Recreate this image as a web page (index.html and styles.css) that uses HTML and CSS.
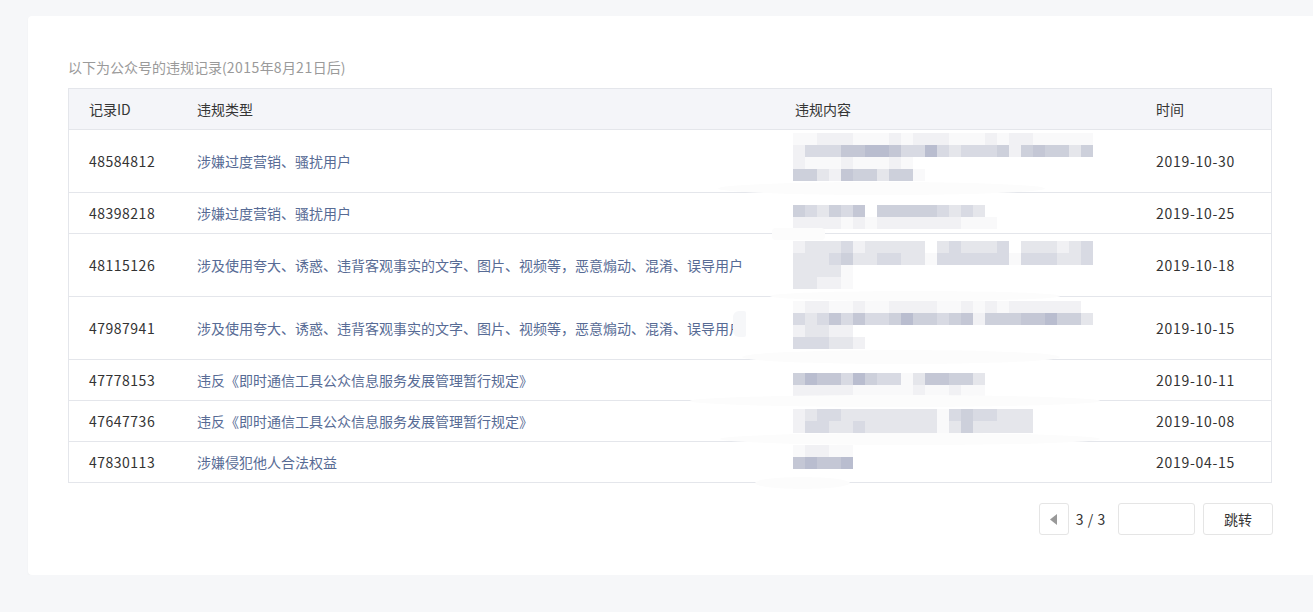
FILE: index.html
```html
<!DOCTYPE html>
<html lang="zh-CN">
<head>
<meta charset="utf-8">
<title>违规记录</title>
<link rel="stylesheet" href="styles.css">
</head>
<body>
<div class="card">
  <div class="content">
    <p class="caption">以下为公众号的违规记录(<span class="num">2015</span>年<span class="num">8</span>月<span class="num">21</span>日后)</p>
    <div class="table-wrap">
      <table class="records">
        <colgroup>
          <col class="c-id"><col class="c-type"><col class="c-body"><col class="c-time">
        </colgroup>
        <thead>
          <tr><th>记录ID</th><th>违规类型</th><th>违规内容</th><th>时间</th></tr>
        </thead>
        <tbody>
          <tr>
            <td class="num">48584812</td>
            <td class="type">涉嫌过度营销、骚扰用户</td>
            <td class="body"><div class="mosaic" data-lines="2" data-off="-6" data-rows="1122211121222111212211111|2444667764474344452565535|2111211121|55326553551"></div></td>
            <td class="num date">2019-10-30</td>
          </tr>
          <tr>
            <td class="num">48398218</td>
            <td class="type">涉嫌过度营销、骚扰用户</td>
            <td class="body"><div class="mosaic" data-lines="1" data-off="3" data-rows="5435460555554343|22221212222222111"></div></td>
            <td class="num date">2019-10-25</td>
          </tr>
          <tr>
            <td class="num">48115126</td>
            <td class="type">涉及使用夸大、诱惑、违背客观事实的文字、图片、视频等，恶意煽动、混淆、误导用户</td>
            <td class="body"><div class="mosaic" data-lines="2" data-off="-2" data-rows="2333423333303433340333234|3334533443314444441444334|33331|33221"></div></td>
            <td class="num date">2019-10-18</td>
          </tr>
          <tr>
            <td class="num">47987941</td>
            <td class="type">涉及使用夸大、诱惑、违背客观事实的文字、图片、视频等，恶意煽动、混淆、误导用户</td>
            <td class="body"><div class="mosaic" data-lines="2" data-off="-5" data-rows="122112112222112121222222|4346464457554562555667553|23322|444332"></div></td>
            <td class="num date">2019-10-15</td>
          </tr>
          <tr>
            <td class="num">47778153</td>
            <td class="type">违反《即时通信工具公众信息服务发展管理暂行规定》</td>
            <td class="body"><div class="mosaic" data-lines="1" data-off="4" data-rows="5766475441366553|2222211111211211"></div></td>
            <td class="num date">2019-10-11</td>
          </tr>
          <tr>
            <td class="num">47647736</td>
            <td class="type">违反《即时通信工具公众信息服务发展管理暂行规定》</td>
            <td class="body"><div class="mosaic" data-lines="1" data-off="-1" data-rows="23443333333314544333|24433433333313533333"></div></td>
            <td class="num date">2019-10-08</td>
          </tr>
          <tr>
            <td class="num">47830113</td>
            <td class="type">涉嫌侵犯他人合法权益</td>
            <td class="body"><div class="mosaic" data-lines="1" data-off="-6" data-rows="12211|67667"></div></td>
            <td class="num date">2019-04-15</td>
          </tr>
        </tbody>
      </table>
      <div class="smudges" aria-hidden="true">
        <span class="smudge sm1"></span>
        <span class="smudge sm2"></span>
        <span class="smudge sm3"></span>
        <span class="smudge sm4"></span>
        <span class="smudge sm5"></span>
        <span class="smudge sm6"></span>
        <span class="smudge sm7"></span>
        <span class="smudge sm8"></span>
      </div>
    </div>
    <div class="pager">
      <button class="pg-btn pg-prev" type="button" aria-label="上一页">
        <svg width="7" height="11" viewBox="0 0 7 11"><polygon points="7,0 7,11 0,5.5" fill="#999999"/></svg>
      </button>
      <span class="pg-num num">3 / 3</span>
      <input class="pg-input" type="text" aria-label="页码">
      <button class="pg-btn pg-go" type="button">跳转</button>
    </div>
  </div>
</div>
<script src="script.js"></script>
</body>
</html>
```

FILE: styles.css
```css
html, body {
  margin: 0;
  padding: 0;
}
body {
  background: #f6f7f9;
  overflow: hidden;
  font-family: "Noto Sans CJK SC", "Noto Sans", sans-serif;
  font-size: 14px;
  color: #353535;
}
.card {
  margin: 16px 0 0 28px;
  width: 1320px;
  background: #fff;
  border-radius: 4px;
  box-shadow: 0 1px 2px rgba(0, 0, 0, 0.04);
  padding: 40px 0 40px 40px;
  box-sizing: border-box;
}
.content {
  width: 1205px;
}
.caption {
  margin: 0 0 10px;
  line-height: 22px;
  color: #9a9a9a;
}
.num {
  letter-spacing: 0.5px;
}
.table-wrap {
  position: relative;
  width: 1204px;
}
.records {
  width: 1204px;
  table-layout: fixed;
  border-collapse: separate;
  border-spacing: 0;
  border: 1px solid #e4e6eb;
  border-bottom: none;
}
.c-id { width: 108px; }
.c-type { width: 598px; }
.c-body { width: 361px; }
.records th,
.records td {
  padding: 9px 0 9px 20px;
  line-height: 22px;
  text-align: left;
  vertical-align: middle;
  border-bottom: 1px solid #e4e6eb;
  white-space: nowrap;
  overflow: visible;
  font-weight: normal;
}
.records th {
  background: #f4f5f9;
  color: #353535;
}
.records td {
  color: #333;
}
.records td.date {
  letter-spacing: 0.7px;
}
.records td.type {
  color: #576b95;
}
.mosaic {
  display: grid;
  grid-template-columns: repeat(25, 12px);
  grid-auto-rows: 12px;
  margin-left: -2px;
  align-content: start;
}
.mosaic span { display: block; }
.s0 { background: transparent; }
.s1 { background: #f9f9fa; }
.s2 { background: #f1f1f4; }
.s3 { background: #e5e6eb; }
.s4 { background: #d8dae3; }
.s5 { background: #cdd0db; }
.s6 { background: #c4c7d5; }
.s7 { background: #b9bdcf; }

.smudges {
  position: absolute;
  left: 0;
  top: 0;
  width: 0;
  height: 0;
}
.smudge {
  position: absolute;
  display: block;
  background: #fcfcfc;
  border-radius: 50%;
}
.sm1 { left: 650px; top: 94px; width: 327px; height: 13px; }
.sm2 { left: 704px; top: 140px; width: 53px; height: 12px; border-radius: 4px; }
.sm3 { left: 702px; top: 203px; width: 290px; height: 10px; }
.sm4 { left: 665px; top: 223px; width: 13px; height: 26px; border-radius: 6px 2px 2px 6px; background: #f6f7f9; }
.sm5 { left: 674px; top: 262px; width: 318px; height: 14px; }
.sm6 { left: 622px; top: 307px; width: 410px; height: 12px; }
.sm7 { left: 652px; top: 345px; width: 380px; height: 12px; }
.sm8 { left: 687px; top: 389px; width: 95px; height: 12px; }

.pager {
  display: flex;
  justify-content: flex-end;
  align-items: center;
  margin-top: 20px;
  height: 32px;
}
.pg-btn {
  height: 32px;
  border: 1px solid #e5e5e5;
  border-radius: 3px;
  background: #fff;
  font-family: inherit;
  font-size: 14px;
  color: #353535;
  padding: 0;
  box-sizing: border-box;
  display: flex;
  align-items: center;
  justify-content: center;
}
.pg-prev { width: 30px; }
.pg-num {
  margin: 0 12px 0 7px;
  color: #353535;
  line-height: 22px;
  letter-spacing: 0.6px;
}
.pg-input {
  width: 77px;
  height: 32px;
  box-sizing: border-box;
  border: 1px solid #e5e5e5;
  border-radius: 3px;
  margin: 0 8px 0 0;
  padding: 0 8px;
  font-family: inherit;
}
.pg-go { width: 70px; }
```

FILE: script.js
```js
document.querySelectorAll('.mosaic').forEach(function (m) {
  var lines = parseInt(m.dataset.lines, 10);
  var off = parseInt(m.dataset.off, 10);
  m.style.height = (lines * 22) + 'px';
  m.style.transform = 'translateY(' + off + 'px)';
  m.dataset.rows.split('|').forEach(function (row) {
    for (var i = 0; i < 25; i++) {
      var s = document.createElement('span');
      var c = row.charAt(i) || '0';
      s.className = 's' + c;
      m.appendChild(s);
    }
  });
});
```
